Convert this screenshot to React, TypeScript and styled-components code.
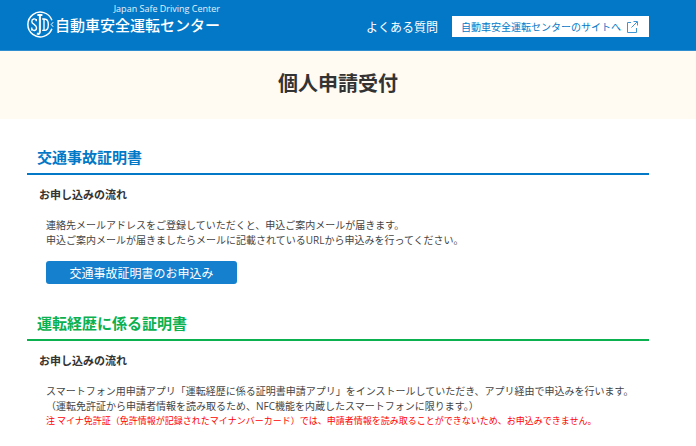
import React from "react";
import styled, { createGlobalStyle } from "styled-components";

const GlobalStyle = createGlobalStyle`
  * { box-sizing: border-box; }
  body {
    margin: 0;
    background: #fff;
    color: #333;
    font-family: "Noto Sans CJK JP", sans-serif;
    font-size: 10px;
  }
  h1, h2, h3, p { margin: 0; }
`;

const Header = styled.header`
  display: flex;
  justify-content: space-between;
  align-items: flex-start;
  height: 51px;
  padding: 0 47px 0 27px;
  border-bottom: 1px solid #2e8ecf;
  background: #0378c7;
`;

const Brand = styled.a`
  display: flex;
  align-items: flex-start;
  gap: 1px;
  padding-top: 3px;
  color: #fff;
  text-decoration: none;
`;

const Emblem = styled.svg`
  width: 27px;
  height: 27px;
  margin-top: 8px;
`;

const BrandText = styled.span`
  display: flex;
  flex-direction: column;
  align-items: flex-end;
`;

const BrandSub = styled.span`
  font-family: "Open Sans", sans-serif;
  font-size: 9px;
  line-height: 11px;
  color: #e3f1fa;
`;

const BrandName = styled.span`
  font-size: 15px;
  font-weight: 500;
  line-height: 22px;
`;

const Nav = styled.nav`
  display: flex;
  align-items: center;
  gap: 14px;
  padding-top: 16px;
`;

const FaqLink = styled.a`
  color: #fff;
  font-size: 12px;
  line-height: 20px;
  text-decoration: none;
`;

const SiteLink = styled.a`
  display: flex;
  align-items: center;
  gap: 5px;
  height: 21px;
  padding: 0 11px 0 9px;
  background: #fff;
  color: #0378c7;
  font-size: 10px;
  line-height: 20px;
  text-decoration: none;
`;

const ExternalIcon = styled.svg`
  width: 12px;
  height: 12px;
`;

const Hero = styled.div`
  padding: 17px 47px 21px 27px;
  background: #fffaf2;
  text-align: center;
`;

const Title = styled.h1`
  font-size: 20px;
  font-weight: 700;
  line-height: 30px;
`;

const Main = styled.main`
  padding: 27px 47px 16px 27px;
`;

const Section = styled.section`
  & + & { margin-top: 28px; }
`;

const Heading = styled.h2<{ $color: string }>`
  padding: 0 10px 6px;
  border-bottom: 2px solid ${(p) => p.$color};
  color: ${(p) => p.$color};
  font-size: 15px;
  font-weight: 700;
  line-height: 21px;
`;

const Subheading = styled.h3`
  padding: 11px 12px 0;
  font-size: 11px;
  font-weight: 700;
  line-height: 16px;
`;

const Body = styled.div`
  padding: 16px 0 0 19px;
`;

const Text = styled.p`
  color: #444;
  font-family: "Open Sans", "Noto Sans CJK JP", sans-serif;
  font-size: 10px;
  line-height: 15px;
`;

const Note = styled.p`
  color: #f00;
  font-size: 9px;
  line-height: 13px;
`;

const ApplyButton = styled.button`
  display: block;
  min-width: 191px;
  height: 23px;
  margin-top: 13px;
  padding: 0 23px;
  border: 0;
  border-radius: 3px;
  background: #1480ce;
  color: #fff;
  font-family: inherit;
  font-size: 12px;
  line-height: 22px;
  cursor: pointer;
`;

export default function App() {
  return (
    <>
      <GlobalStyle />
      <Header>
        <Brand href="#">
          <Emblem viewBox="0 0 27 27" fill="none" stroke="#fff" aria-hidden="true">
            <path d="M24.9 9.2A12.4 12.4 0 1 0 24.9 17.8" strokeWidth="1.5" />
            <path d="M9.3 10.2V8M9.3 9.6C8.4 6.9 4.8 7.6 4.8 10.4C4.8 13.6 9.5 13.3 9.5 16.8C9.5 20.2 5.8 20.4 4.7 17.6M4.7 16.6V19.4" strokeWidth="1.4" />
            <path d="M10.4 4H15.4M12.9 4V20.2C12.9 22.9 11.8 23.6 10 22.4" strokeWidth="2" />
            <path d="M15.2 8H17.4C22.6 8 22.6 19.4 17.4 19.4H15.2M17 8V19.4" strokeWidth="1.4" />
            <path d="M26.2 11.2L24.2 13.5L26.2 15.8" strokeWidth="1" />
          </Emblem>
          <BrandText>
            <BrandSub>Japan Safe Driving Center</BrandSub>
            <BrandName>自動車安全運転センター</BrandName>
          </BrandText>
        </Brand>
        <Nav>
          <FaqLink href="#">よくある質問</FaqLink>
          <SiteLink href="#">
            自動車安全運転センターのサイトへ
            <ExternalIcon viewBox="0 0 12 12" fill="none" stroke="#3d96d3" aria-hidden="true">
              <path d="M5 1.5H1.5V11.5H10.5V7M5.5 6.5L11 1M7.5 .5H11.5V4.5" />
            </ExternalIcon>
          </SiteLink>
        </Nav>
      </Header>
      <Hero>
        <Title>個人申請受付</Title>
      </Hero>
      <Main>
        <Section>
          <Heading $color="#0378c7">交通事故証明書</Heading>
          <Subheading>お申し込みの流れ</Subheading>
          <Body>
            <Text>連絡先メールアドレスをご登録していただくと、申込ご案内メールが届きます。</Text>
            <Text>申込ご案内メールが届きましたらメールに記載されているURLから申込みを行ってください。</Text>
            <ApplyButton type="button">交通事故証明書のお申込み</ApplyButton>
          </Body>
        </Section>
        <Section>
          <Heading $color="#0bb04f">運転経歴に係る証明書</Heading>
          <Subheading>お申し込みの流れ</Subheading>
          <Body>
            <Text>スマートフォン用申請アプリ「運転経歴に係る証明書申請アプリ」をインストールしていただき、アプリ経由で申込みを行います。</Text>
            <Text>（運転免許証から申請者情報を読み取るため、NFC機能を内蔵したスマートフォンに限ります。）</Text>
            <Note>注 マイナ免許証（免許情報が記録されたマイナンバーカード）では、申請者情報を読み取ることができないため、お申込みできません。</Note>
          </Body>
        </Section>
      </Main>
    </>
  );
}
